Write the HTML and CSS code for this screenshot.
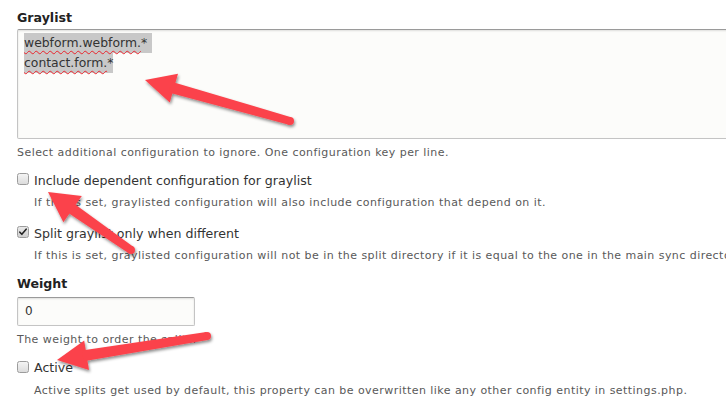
FILE: index.html
```html
<!DOCTYPE html>
<html>
<head>
<meta charset="utf-8">
<link rel="stylesheet" href="styles.css">
</head>
<body>
<div class="form">
  <div class="item">
    <div class="label">Graylist</div>
    <div class="textarea">
      <span class="line first"><span class="spell">webform.webform.</span>*</span>
      <span class="line"><span class="spell">contact.form.</span>*</span>
    </div>
    <div class="description d-select">Select additional configuration to ignore. One configuration key per line.</div>
  </div>

  <div class="item check-item ci-1">
    <div class="check-row">
      <span class="box"></span>
      <span class="check-label">Include dependent configuration for graylist</span>
    </div>
    <div class="description indented">If this is set, graylisted configuration will also include configuration that depend on it.</div>
  </div>

  <div class="item check-item ci-2">
    <div class="check-row">
      <span class="box checked"><svg viewBox="0 0 12 12" width="10" height="10"><path d="M2.2 6.2 L4.6 8.8 L9.8 2.6" fill="none" stroke="#222" stroke-width="1.9" stroke-linecap="round" stroke-linejoin="round"/></svg></span>
      <span class="check-label">Split graylist only when different</span>
    </div>
    <div class="description indented">If this is set, graylisted configuration will not be in the split directory if it is equal to the one in the main sync directory.</div>
  </div>

  <div class="item weight-item">
    <div class="label weight-label">Weight</div>
    <div class="input">0</div>
    <div class="description d-weight">The weight to order the splits.</div>
  </div>

  <div class="item check-item ci-3">
    <div class="check-row">
      <span class="box"></span>
      <span class="check-label">Active</span>
    </div>
    <div class="description indented">Active splits get used by default, this property can be overwritten like any other config entity in settings.php.</div>
  </div>
</div>

<svg class="arrows" width="726" height="406" viewBox="0 0 726 406">
  <defs>
    <filter id="shadow" x="-20%" y="-20%" width="140%" height="160%">
      <feDropShadow dx="1" dy="2" stdDeviation="1.8" flood-color="#000" flood-opacity="0.45"/>
    </filter>
  </defs>
  <g class="arrow" filter="url(#shadow)">
    <polygon points="145,80 178.0,73.8 169.8,102.6"/>
    <polygon points="171.6,81.8 291.1,117.2 288.9,124.8 168.6,92.4"/>
    <circle cx="290" cy="121" r="4"/>
  </g>
  <g class="arrow" filter="url(#shadow)">
    <polygon points="48,192 81.8,196.1 63.4,222.3"/>
    <polygon points="72.5,202.4 133.3,246.7 128.7,253.3 66.1,211.4"/>
    <circle cx="131" cy="250" r="4"/>
  </g>
  <g class="arrow" filter="url(#shadow)">
    <polygon points="57,360 84.2,340.5 89.0,370.1"/>
    <polygon points="81.8,350.5 206.4,332.1 207.6,339.9 83.6,361.3"/>
    <circle cx="207" cy="336" r="4"/>
  </g>
</svg>
</body>
</html>
```

FILE: styles.css
```css
html, body {
  margin: 0;
  padding: 0;
  background: #fff;
}
body {
  width: 726px;
  height: 406px;
  overflow: hidden;
  position: relative;
  font-family: "DejaVu Sans", sans-serif;
}
.form {
  padding: 8.6px 0 0 17px;
}
.label {
  font-weight: bold;
  font-size: 12.6px;
  line-height: 18px;
  color: #222;
  margin-bottom: 2.4px;
}
.textarea {
  box-sizing: border-box;
  width: 780px;
  height: 110px;
  border: 1px solid #c4c4c4;
  border-top-color: #9a9a9a;
  border-radius: 2px;
  background: #fcfcfa;
  box-shadow: inset 0 1px 2px rgba(0, 0, 0, 0.12);
  padding: 3px 6px;
  font-size: 12.4px;
  line-height: 20px;
  color: #333;
}
.line {
  display: block;
  width: max-content;
  background: #c8c8c8;
}
.line.first {
  padding-right: 5px;
}
.spell {
  text-decoration: underline wavy #e8232b;
  text-decoration-thickness: 1px;
  text-underline-offset: 3px;
}
.description {
  font-size: 11px;
  line-height: 16px;
  letter-spacing: 0.45px;
  color: #595959;
  white-space: nowrap;
  margin-top: 5.2px;
}
.d-select {
  margin-top: 6px;
}
.indented {
  padding-left: 17px;
}
.check-row {
  display: flex;
  align-items: flex-start;
  gap: 5px;
  font-size: 12.6px;
  line-height: 18px;
  color: #333;
}
.box {
  box-sizing: border-box;
  flex: none;
  width: 12px;
  height: 12px;
  margin-top: 1.4px;
  border: 1px solid #9c9c9c;
  border-radius: 2.5px;
  background: linear-gradient(#f4f4f4, #dcdcdc);
  display: flex;
  align-items: center;
  justify-content: center;
}
.box.checked {
  background: linear-gradient(#e8e8e8, #cfcfcf);
}
.box svg {
  display: block;
}
.ci-1 { margin-top: 10.6px; }
.ci-2 { margin-top: 13.9px; }
.ci-2 .description { margin-top: 5.6px; }
.weight-item { margin-top: 10.4px; }
.weight-label { margin-bottom: 4.4px; }
.input {
  box-sizing: border-box;
  width: 178px;
  height: 29px;
  border: 1px solid #c4c4c4;
  border-top-color: #9a9a9a;
  border-radius: 2px;
  background: #fcfcfa;
  box-shadow: inset 0 1px 2px rgba(0, 0, 0, 0.12);
  padding: 0 7px;
  font-size: 12px;
  line-height: 27px;
  color: #333;
}
.d-weight { margin-top: 5.5px; }
.ci-3 { margin-top: 11.8px; }
.arrows {
  position: absolute;
  left: 0;
  top: 0;
  pointer-events: none;
}
.arrow {
  fill: #fb434b;
}
```
